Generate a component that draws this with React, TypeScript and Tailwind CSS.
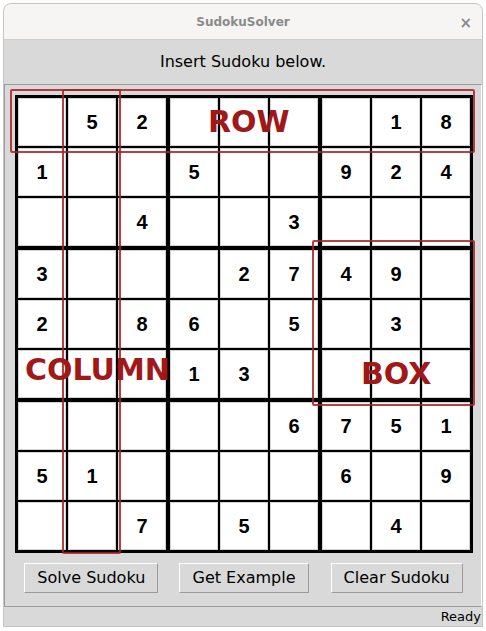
import React from "react";

const board: number[][] = [
  [0, 5, 2, 0, 0, 0, 0, 1, 8],
  [1, 0, 0, 5, 0, 0, 9, 2, 4],
  [0, 0, 4, 0, 0, 3, 0, 0, 0],
  [3, 0, 0, 0, 2, 7, 4, 9, 0],
  [2, 0, 8, 6, 0, 5, 0, 3, 0],
  [0, 0, 0, 1, 3, 0, 0, 0, 0],
  [0, 0, 0, 0, 0, 6, 7, 5, 1],
  [5, 1, 0, 0, 0, 0, 6, 0, 9],
  [0, 0, 7, 0, 5, 0, 0, 4, 0],
];

const sans = { fontFamily: '"DejaVu Sans", sans-serif' };

function Box({ br, bc }: { br: number; bc: number }) {
  const cells = [];
  for (let r = 0; r < 3; r++) {
    for (let c = 0; c < 3; c++) {
      const v = board[br * 3 + r][bc * 3 + c];
      cells.push(
        <div
          key={`${r}-${c}`}
          className="w-[48px] h-[48px] bg-white border border-[#d4d4d4] flex items-center justify-center text-[20px] font-bold text-black"
          style={{ fontFamily: '"Liberation Sans", Arial, sans-serif' }}
        >
          {v ? v : ""}
        </div>
      );
    }
  }
  return <div className="grid grid-cols-3 gap-[2px] bg-black">{cells}</div>;
}

function Btn({ label }: { label: string }) {
  return (
    <button
      className="h-[30px] px-[12px] bg-[#d9d9d9] border border-t-white border-l-white border-r-[#9a9a9a] border-b-[#9a9a9a] text-[16px] text-black"
      style={sans}
    >
      {label}
    </button>
  );
}

export default function App() {
  const boxes = [];
  for (let br = 0; br < 3; br++) for (let bc = 0; bc < 3; bc++) boxes.push(<Box key={`${br}${bc}`} br={br} bc={bc} />);

  return (
    <div className="w-[486px] h-[631px] bg-white pt-[3px] px-[3px]">
      <div className="w-[480px] h-[624px] flex flex-col rounded-t-[8px] border border-[#c4c4c4] overflow-hidden bg-[#d9d9d9]">
        <div className="h-[36px] bg-[#f6f5f4] border-b border-[#d0cfce] flex items-center justify-center relative shrink-0">
          <span className="text-[12px] font-bold text-[#8a8a8a]" style={sans}>SudokuSolver</span>
          <span className="absolute right-[10px] top-[8px] text-[15px] text-[#8a8a8a] font-bold" style={sans}>×</span>
        </div>
        <div className="h-[44px] flex items-center justify-center text-[16px] text-black shrink-0" style={sans}>
          Insert Sudoku below.
        </div>
        <div className="mx-0 h-[523px] border border-t-[#9c9c9c] border-l-[#9c9c9c] border-r-white border-b-[#9c9c9c] shrink-0 pl-[10px] pt-[10px]">
          <div className="relative w-[458px]">
            <div className="grid grid-cols-3 gap-[4px] bg-black p-[3px] w-[458px]">{boxes}</div>

            <div className="absolute left-[-5px] top-[-6px] w-[465px] h-[64px] border-2 border-[#a82020]/85 rounded-[2px] pointer-events-none" />
            <div className="absolute left-[47px] top-[-6px] w-[59px] h-[465px] border-2 border-[#a82020]/85 rounded-[2px] pointer-events-none" />
            <div className="absolute left-[297px] top-[145px] w-[163px] h-[166px] border-2 border-[#a82020]/85 rounded-[2px] pointer-events-none" />

            <span className="absolute left-[193px] top-[12px] text-[30px] font-bold text-[#a11818] leading-none" style={sans}>ROW</span>
            <span className="absolute left-[10px] top-[260px] text-[30px] font-bold text-[#a11818] leading-none" style={sans}>COLUMN</span>
            <span className="absolute left-[346px] top-[264px] text-[30px] font-bold text-[#a11818] leading-none" style={sans}>BOX</span>
          </div>
          <div className="w-[458px] grid grid-cols-3 mt-[10px]">
            <div className="flex justify-center"><Btn label="Solve Sudoku" /></div>
            <div className="flex justify-center"><Btn label="Get Example" /></div>
            <div className="flex justify-center"><Btn label="Clear Sudoku" /></div>
          </div>
        </div>
        <div className="flex-1 flex items-center justify-end pr-[1px] text-[13px] text-black" style={sans}>
          Ready
        </div>
      </div>
    </div>
  );
}
